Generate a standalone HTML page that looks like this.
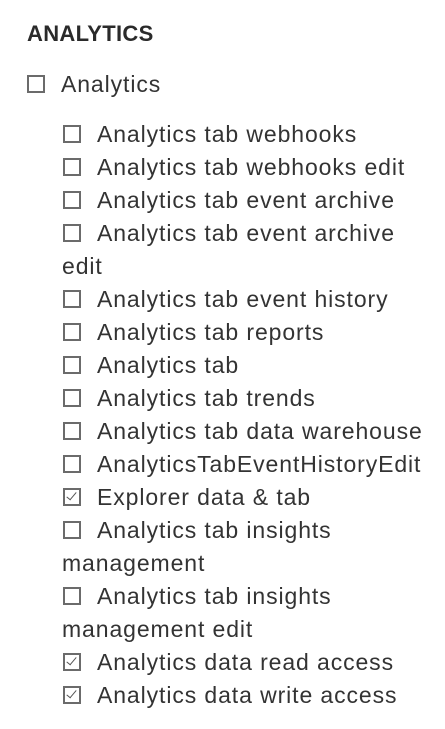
<html><head><style>
body{margin:0;background:#fff;font-family:"Liberation Sans",sans-serif;color:#333;}
h1{position:absolute;left:27px;top:20px;margin:0;font-size:22px;font-weight:bold;color:#2a2a2a;line-height:28px;letter-spacing:0.3px}
.row{position:absolute;left:62px;font-size:23px;line-height:33px;white-space:nowrap;letter-spacing:0.9px}
.cb{display:inline-block;width:14px;height:14px;border:2px solid #6b6b6b;vertical-align:-1px;margin-right:16px;margin-left:1px;position:relative}
.cb.c::after{content:"";position:absolute;left:4px;top:0px;width:4px;height:9px;border:solid #555;border-width:0 1.5px 1.5px 0;transform:rotate(40deg)}
</style></head><body>
<h1>ANALYTICS</h1>
<div class="row" style="left:26px;top:68px"><span class="cb"></span>Analytics</div>
<div class="row" style="top:118px"><span class="cb"></span>Analytics tab webhooks</div>
<div class="row" style="top:151px"><span class="cb"></span>Analytics tab webhooks edit</div>
<div class="row" style="top:184px"><span class="cb"></span>Analytics tab event archive</div>
<div class="row" style="top:217px"><span class="cb"></span>Analytics tab event archive<br>edit</div>
<div class="row" style="top:283px"><span class="cb"></span>Analytics tab event history</div>
<div class="row" style="top:316px"><span class="cb"></span>Analytics tab reports</div>
<div class="row" style="top:349px"><span class="cb"></span>Analytics tab</div>
<div class="row" style="top:382px"><span class="cb"></span>Analytics tab trends</div>
<div class="row" style="top:415px"><span class="cb"></span>Analytics tab data warehouse</div>
<div class="row" style="top:448px"><span class="cb"></span>AnalyticsTabEventHistoryEdit</div>
<div class="row" style="top:481px"><span class="cb c"></span>Explorer data &amp; tab</div>
<div class="row" style="top:514px"><span class="cb"></span>Analytics tab insights<br>management</div>
<div class="row" style="top:580px"><span class="cb"></span>Analytics tab insights<br>management edit</div>
<div class="row" style="top:646px"><span class="cb c"></span>Analytics data read access</div>
<div class="row" style="top:679px"><span class="cb c"></span>Analytics data write access</div>
</body></html>
